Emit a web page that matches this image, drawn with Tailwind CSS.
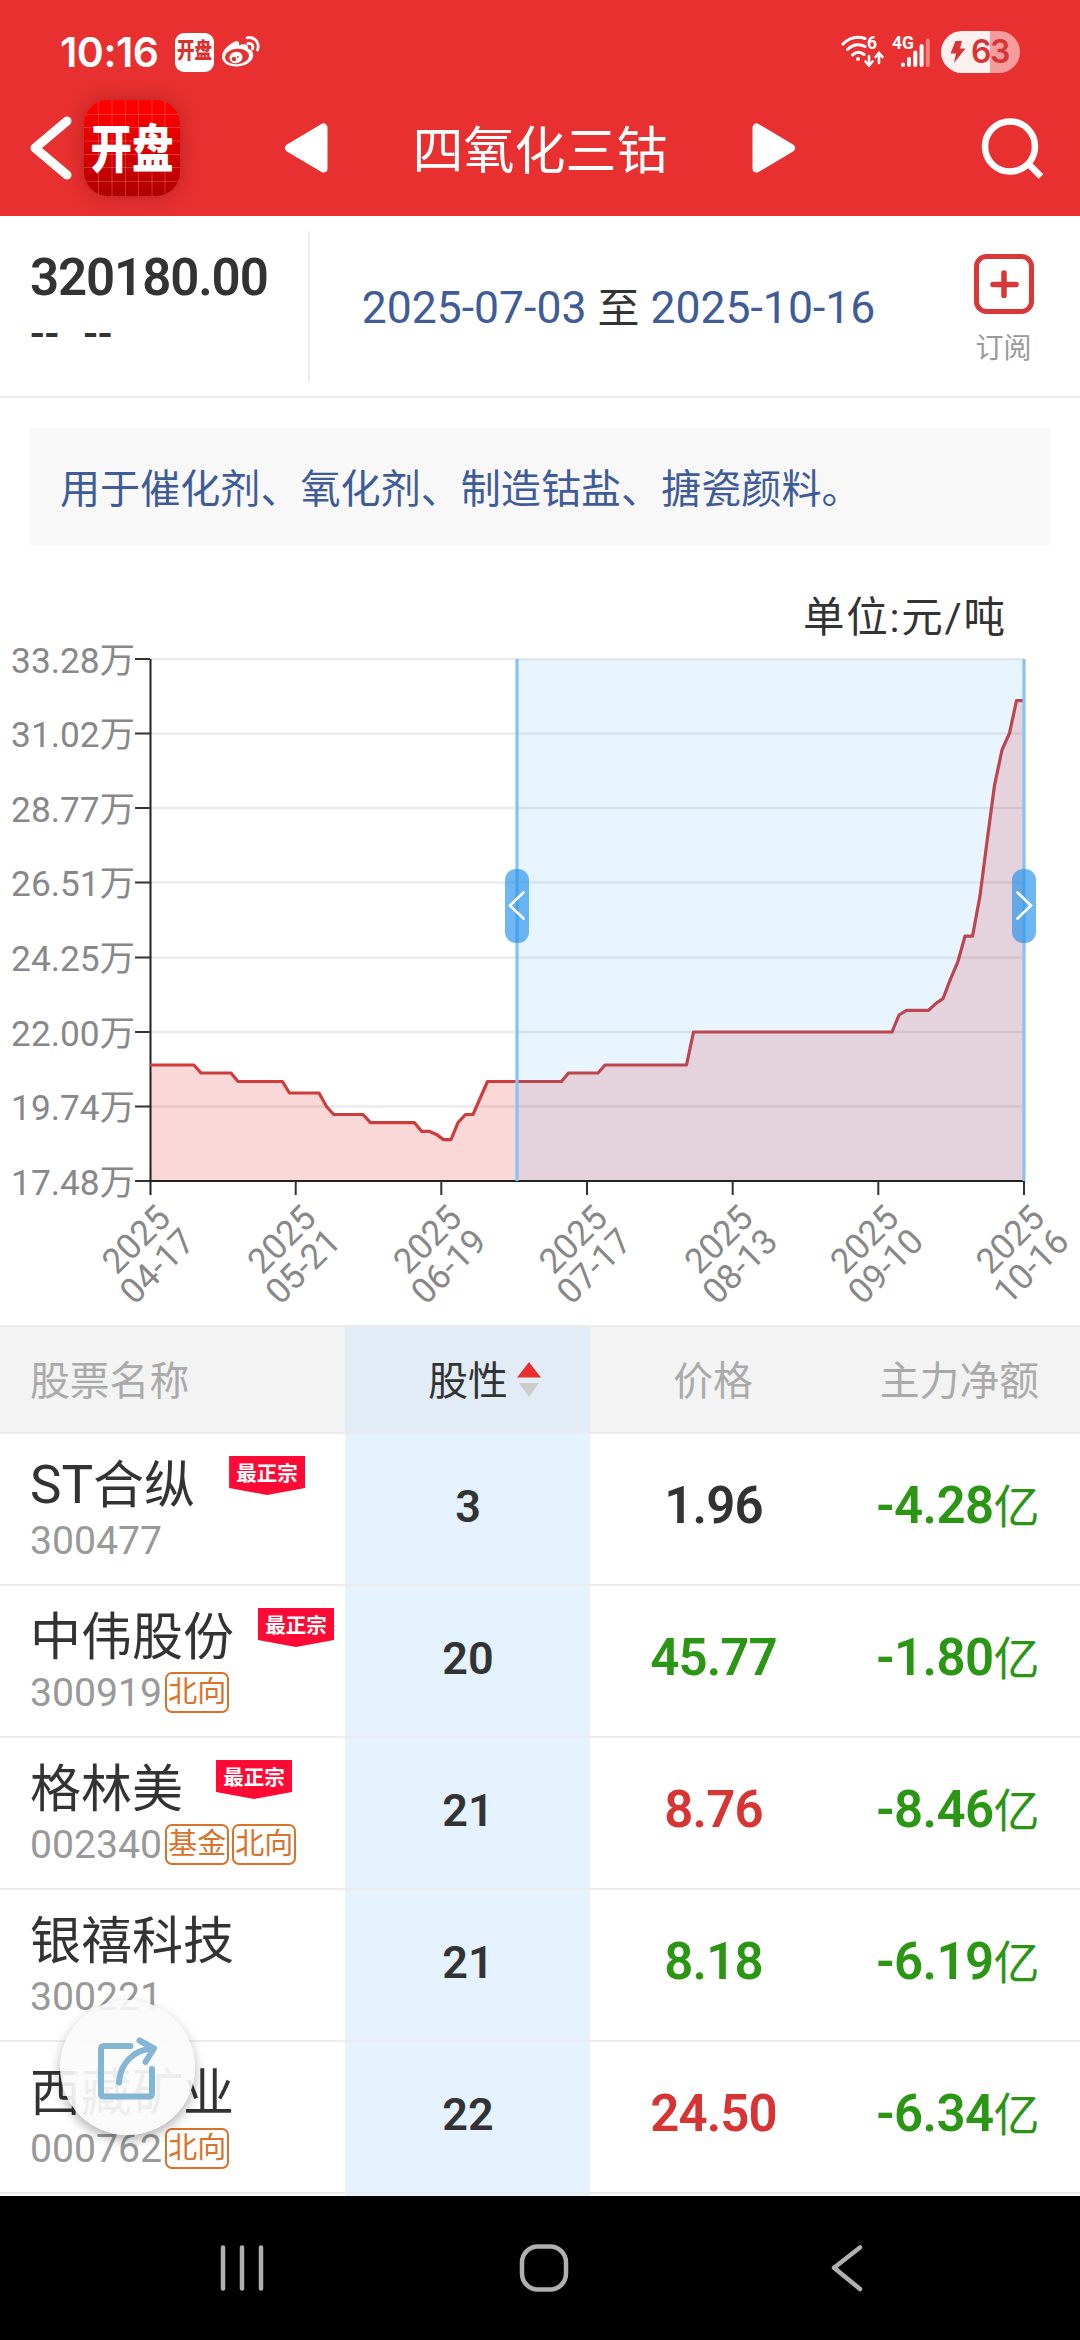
<!DOCTYPE html>
<html lang="zh-CN">
<head>
    <meta charset="UTF-8" />
    <meta name="viewport" content="width=device-width, initial-scale=1.0" />
    <title>四氧化三钴</title>
    <!-- Tailwind CSS -->
    <script src="https://cdn.jsdelivr.net/npm/@tailwindcss/browser@4"></script>
</head>
<body class="bg-white text-[#333] font-['Roboto','Noto_Sans_CJK_SC',sans-serif]">
<div class="relative w-[1080px] h-[2340px] flex flex-col overflow-hidden">

    <!-- Header -->
    <header class="h-[216px] shrink-0 bg-[#e83030] text-white">
        <!-- 状态栏 -->
        <div class="h-[84px] pl-[60px] pr-[60px] pt-5 flex items-center">
            <span class="w-[115px] text-[41px] leading-none font-semibold font-['Inter'] tracking-[-0.5px]">10:16</span>
            <span class="w-[39px] h-[39px] rounded-[9px] bg-white text-[#d93030] flex items-center justify-center">
                <span class="text-[17.5px] leading-none font-black scale-y-125">开盘</span>
            </span>
            <svg class="ml-2 w-[38px] h-[32px]" viewBox="0 0 38 32">
                <path d="M12 6C15 4 18 5 17 9.500C22 7 27 8 26 12.500C30 14 32 17 31 21C29 27 22 30.500 14.500 30.500C6 30.500 0 26.500 0 20.500C0 15 6 9 12 6Z" fill="#fff"/>
                <ellipse cx="15" cy="20.500" rx="12" ry="7.700" fill="#e83030" transform="rotate(-6 15 20.500)"/>
                <ellipse cx="14" cy="21.500" rx="6.600" ry="5.800" fill="#fff" transform="rotate(-15 14 21.500)"/>
                <circle cx="12" cy="23" r="2.200" fill="#e83030"/>
                <circle cx="15.800" cy="21" r="1" fill="#e83030"/>
                <path d="M25 1.800C33 0 38 7 35.500 14M26 7.500C30 6.800 31.500 9.500 30.500 13" fill="none" stroke="#fff" stroke-width="2.800" stroke-linecap="round"/>
            </svg>
            <svg class="ml-auto w-[90px] h-[36px]" viewBox="839 35 90 36">
                <g fill="none" stroke="#fff" stroke-linecap="round" stroke-width="3">
                    <path d="M842 45C849 38 857 37 864 39.500M846.500 50.500C852 45 859 44.500 864 47.500M851.500 56C855 52.500 859.500 52.500 863 55.500"/>
                    <path d="M868 57V66M864.500 62.500L868 66.500L871.500 62.500M878 64V54.500M874.500 58L878 54L881.500 58" stroke-width="2.600"/>
                </g>
                <circle cx="857" cy="60" r="2" fill="#fff"/>
                <text x="866" y="50" font-size="17.500" font-weight="700" fill="#fff">6</text>
                <text x="891" y="49.500" font-size="17.500" font-weight="700" fill="#fff" textLength="22">4G</text>
                <g stroke="#fff" stroke-width="4" stroke-linecap="round">
                    <path d="M902 65.500V66M908 60V66M914.300 53.500V66M920.600 47V66"/>
                    <path d="M926.800 41.500V66" stroke="#f58080"/>
                </g>
            </svg>
            <div class="ml-[11px] w-[79px] h-[42px] rounded-full bg-linear-to-r from-[#fdf0f0] from-62% to-[#f79c9c] to-62% text-[#d93434] flex items-center pl-[9px]">
                <svg class="w-[16px] h-[22px]" viewBox="0 0 16 22"><path d="M5.500 0H12L10 7.500H15.500L4 22L6 12.500H0.500Z" fill="#d93434"/></svg>
                <span class="ml-[5px] text-[32px] leading-none font-semibold font-['Inter'] tracking-[-1.500px]">63</span>
            </div>
        </div>
        <!-- 标题栏 -->
        <div class="h-[132px] flex items-center pl-[29px] pr-[35px] pb-[4px]">
            <svg class="w-[43px] h-[66px]" viewBox="0 0 43 66"><path d="M38 6L6 33L38 60" fill="none" stroke="#fff" stroke-width="9" stroke-linecap="round" stroke-linejoin="round"/></svg>
            <div class="ml-[12px] w-[96px] h-[96px] rounded-[24px] overflow-hidden shadow-[0_0_18px_rgba(120,20,20,0.45)]">
                <svg class="w-full h-full" viewBox="0 0 96 96">
                    <defs><linearGradient id="logo" x2="0" y2="1"><stop offset="0.1" stop-color="#fd0000"/><stop offset="1" stop-color="#b00000"/></linearGradient></defs>
                    <rect width="96" height="96" fill="url(#logo)"/>
                    <path d="M14.500 0V96M28 0V96M41.500 0V96M54.500 0V96M68 0V96M81 0V96M0 14.500H96M0 27.500H96M0 41H96M0 54.500H96M0 67.500H96M0 81.500H96" stroke="#fff" stroke-opacity=".2"/>
                    <text x="48" y="68" text-anchor="middle" font-size="41.500" font-weight="900" fill="#fff" transform="translate(0 -17) scale(1 1.250)">开盘</text>
                </svg>
            </div>
            <svg class="ml-[104px] w-[44px] h-[50px]" viewBox="0 0 44 50"><path d="M5 25L39.500 4.500V45.500Z" fill="#fff" stroke="#fff" stroke-width="8" stroke-linejoin="round"/></svg>
            <h1 class="w-[424px] pt-[7px] text-center text-[51px] leading-none">四氧化三钴</h1>
            <svg class="w-[44px] h-[50px]" viewBox="0 0 44 50"><path d="M39 25L4.500 4.500V45.500Z" fill="#fff" stroke="#fff" stroke-width="8" stroke-linejoin="round"/></svg>
            <svg class="ml-auto w-[64px] h-[64px]" viewBox="0 0 64 64"><circle cx="29" cy="30.500" r="25" fill="none" stroke="#fff" stroke-width="6.500"/><path d="M47.500 48L60 60.500" stroke="#fff" stroke-width="6.500"/></svg>
        </div>
    </header>

    <!-- 价格与日期区间 -->
    <section class="h-[182px] shrink-0 flex border-b-2 border-[#ebebeb]">
        <div class="w-[310px] h-[150px] mt-[15px] pl-[30px] border-r-2 border-[#ebebeb]">
            <p class="mt-[21px] text-[51px] leading-[52px] font-semibold tracking-[-1.1px]">320180.00</p>
            <p class="mt-[3px] flex gap-[24px] text-[43px] leading-[52px] font-medium"><span>--</span><span>--</span></p>
        </div>
        <p class="w-[617px] text-center text-[44.500px] leading-[184px] text-[#405c98]">2025-07-03 <span class="text-[#333] text-[42px]">至</span> 2025-10-16</p>
        <div class="w-[153px] pt-[38px] flex flex-col items-center">
            <svg class="w-[60px] h-[60px]" viewBox="0 0 60 60"><rect x="2.500" y="2.500" width="55" height="55" rx="10" fill="none" stroke="#d83838" stroke-width="5"/><path d="M30 19V41.500M19 30.500H42" stroke="#d83838" stroke-width="5.500" stroke-linecap="round"/></svg>
            <span class="mt-[20px] text-[28px] leading-[30px] text-[#999]">订阅</span>
        </div>
    </section>

    <!-- 说明 -->
    <p class="mx-[30px] mt-[30px] h-[117px] shrink-0 pl-[30px] bg-[#f8f8f8] text-[40.1px] leading-[123px] text-[#405c98]">用于催化剂、氧化剂、制造钴盐、搪瓷颜料。</p>

    <!-- 走势图 -->
    <svg class="w-[1080px] h-[780px] shrink-0" viewBox="0 545 1080 780">
        <text x="803" y="632" font-size="41.500" textLength="202" fill="#333">单位:元/吨</text>
        <path d="M150 659H1024M150 733.500H1024M150 808H1024M150 882.500H1024M150 957.500H1024M150 1032H1024M150 1106.500H1024" stroke="#ebebeb" stroke-width="2.500"/>
        <path id="area" fill="#e83030" fill-opacity=".19"/>
        <path d="M150.500 659V1195M150 1181H1024" stroke="#222" stroke-width="2" fill="none"/>
        <path d="M135 659H150M135 733.500H150M135 808H150M135 882.500H150M135 957.500H150M135 1032H150M135 1106.500H150M135 1181H150" stroke="#333" stroke-width="2"/>
        <path d="M295.700 1181V1195M441.300 1181V1195M587 1181V1195M732.700 1181V1195M878.300 1181V1195M1024 1181V1195" stroke="#333" stroke-width="2"/>
        <path id="line" fill="none" stroke="#cf3c3c" stroke-width="3.200" stroke-linejoin="round"/>
        <!-- 选中区间 -->
        <rect x="517" y="659" width="507" height="521" fill="#1e9bff" fill-opacity=".1"/>
        <path d="M517 659V1181M1024 659V1181" stroke="#87c3ef" stroke-width="3.200"/>
        <rect x="505" y="869" width="24" height="74" rx="11" fill="#2492eb" fill-opacity=".66"/>
        <rect x="1012" y="869" width="24" height="74" rx="11" fill="#2492eb" fill-opacity=".66"/>
        <path d="M523.500 892.500L510 905.500L523.500 918.500M1017.500 892.500L1031 905.500L1017.500 918.500" fill="none" stroke="#fff" stroke-width="2.600" stroke-linecap="round"/>
        <g id="yLabels" fill="#888" font-size="35.300" text-anchor="end"></g>
        <g id="xLabels" fill="#888" font-size="35" text-anchor="middle"></g>
    </svg>

    <!-- 股票列表 -->
    <section class="flex-1 min-h-0 overflow-hidden">
        <div class="h-[109px] flex items-center border-y-2 border-[#ebebeb] bg-[#f3f3f3] text-[39.800px] leading-[105px] text-[#aaa]">
            <span class="w-[345px] pl-[30px] pt-[3px]">股票名称</span>
            <span class="w-[245px] h-full bg-[#e1ecf7] text-[#333] flex items-center justify-center gap-[9px] pl-[34px]"><span class="pt-[3px]">股性</span>
                <svg class="w-[24px] h-[36px]" viewBox="0 0 24 36"><path d="M12 0L24 15.500H0Z" fill="#e83030"/><path d="M2 21H22L12 35Z" fill="#ccc"/></svg>
            </span>
            <span class="w-[246px] pt-[3px] text-center">价格</span>
            <span class="w-[244px] pt-[3px] pr-[41px] text-right">主力净额</span>
        </div>
        <div id="stockList"></div>
        <div class="h-[2px] flex"><span class="w-[345px] bg-white"></span><span class="w-[245px] bg-[#e5f2ff]"></span><span class="flex-1 bg-white"></span></div>
    </section>

    <!-- 底部导航 -->
    <nav class="h-[144px] shrink-0 bg-black">
        <svg class="w-[1080px] h-[144px]" viewBox="0 2196 1080 144" fill="none" stroke="#b0b0b0" stroke-width="4.500" stroke-linecap="round" stroke-linejoin="round">
            <path d="M223 2247.500V2288.500M242 2247.500V2288.500M261 2247.500V2288.500"/>
            <rect x="522" y="2246.500" width="44" height="43" rx="16"/>
            <path d="M860 2247.500L834 2267.700L860 2289"/>
        </svg>
    </nav>

    <!-- 分享悬浮按钮 -->
    <button class="absolute left-[60px] top-[2000px] w-[135px] h-[135px] rounded-full bg-[#fafafa]/90 shadow-[0_5px_12px_rgba(0,0,0,0.3)]">
        <svg class="w-[135px] h-[135px]" viewBox="60 2000 135 135">
            <path d="M105 2024H148L179 2055V2099L148 2130H105L73 2099V2055Z" fill="#fff" fill-opacity=".3"/>
            <g fill="none" stroke="#82b6d4" stroke-width="6" stroke-linecap="round" stroke-linejoin="round">
                <path d="M130.500 2046H104Q101 2046 101 2049V2093.500Q101 2096.500 104 2096.500H149Q152 2096.500 152 2093.500V2069"/>
                <path d="M119 2082.500C120 2063 134 2050 152 2048.500M139.500 2040.500L154 2048.500L145.500 2062"/>
            </g>
        </svg>
    </button>
</div>

    <script>
        // 走势折线
        const points = [
            [150,1065],[194,1065],[201,1073],[231,1073],[238,1081.5],[282.5,1081.5],[289.5,1093],[319,1093],
            [326.5,1106.5],[333.7,1114.5],[363,1114.5],[370.5,1122.7],[414.5,1122.7],[421.5,1131.3],[429,1131.3],
            [436.5,1134.4],[443.5,1139.6],[451,1139.6],[458,1122.7],[465.5,1114.5],[473,1114.5],[487.5,1081.5],
            [561.5,1081.5],[568.5,1073],[598,1073],[605,1065],[686.5,1065],[693.5,1032],[892,1032],[899,1015],
            [906.5,1010.3],[928.5,1010.3],[936,1003.4],[943,998.6],[951,977.8],[958,961.3],[965,936.2],[972.5,936.2],
            [980,895.9],[987.3,839.5],[994.5,785.3],[1002,750],[1009.5,733.2],[1016.5,700.7],[1024,700.7]
        ];
        const d = 'M' + points.map(p => p.join(' ')).join('L');
        document.getElementById('line').setAttribute('d', d);
        document.getElementById('area').setAttribute('d', d + 'V1181H150Z');

        // 坐标轴文字
        const yValues = ['33.28', '31.02', '28.77', '26.51', '24.25', '22.00', '19.74', '17.48'];
        document.getElementById('yLabels').innerHTML = yValues
            .map((v, i) => `<text x="135" y="${672.5 + i * 74.6}">${v}万</text>`).join('');

        const xValues = ['04-17', '05-21', '06-19', '07-17', '08-13', '09-10', '10-16'];
        document.getElementById('xLabels').innerHTML = xValues
            .map((v, i) => `
                <g transform="translate(${144.5 + i * 145.67} 1248) rotate(-45)">
                    <text>2025</text>
                    <text x="-4" y="34">${v}</text>
                </g>`).join('');

        // 股票行
        const green = 'text-[#2a9614]', red = 'text-[#d83434]', dark = 'text-[#333]';
        const stocks = [
            { name: '<span class="text-[53px]">ST</span>合纵', code: '300477', badge: 'ml-[34px]', tags: [], rank: 3, price: '1.96', color: dark, net: '-4.28' },
            { name: '中伟股份', code: '300919', badge: 'ml-[24px]', tags: ['北向'], rank: 20, price: '45.77', color: green, net: '-1.80' },
            { name: '格林美', code: '002340', badge: 'ml-[33px]', tags: ['基金', '北向'], rank: 21, price: '8.76', color: red, net: '-8.46' },
            { name: '银禧科技', code: '300221', badge: '', tags: [], rank: 21, price: '8.18', color: green, net: '-6.19' },
            { name: '西藏矿业', code: '000762', badge: '', tags: ['北向'], rank: 22, price: '24.50', color: red, net: '-6.34' }
        ];
        document.getElementById('stockList').innerHTML = stocks.map(s => `
            <div class="h-[152px] flex border-b-2 border-[#ebebeb] bg-white">
                <div class="w-[345px] pl-[30px]">
                    <div class="h-[84px] flex">
                        <span class="text-[51px] leading-[103px] whitespace-nowrap">${s.name}</span>
                        ${s.badge && `<span class="${s.badge} mt-[22px] w-[76px] h-[39px] shrink-0 bg-[#ff0a35] text-white text-[20.5px] leading-[36px] font-bold text-center [clip-path:polygon(0_0,100%_0,100%_82%,50%_100%,0_82%)]">最正宗</span>`}
                    </div>
                    <div class="flex items-center gap-[3px] h-[46px] text-[39.2px] leading-[49px] text-[#999]">
                        <span>${s.code}</span>
                        ${s.tags.map(t => `<span class="w-[64px] h-[41px] rounded-[7px] border-2 border-[#d9722a] text-[#d9722a] text-[29px] leading-[37px] flex justify-center -mt-[2px]">${t}</span>`).join('')}
                    </div>
                </div>
                <div class="w-[245px] pl-[1px] bg-[#e5f2ff] text-center text-[45px] leading-[146px] font-semibold">${s.rank}</div>
                <div class="w-[246px] pl-[1px] text-center text-[51px] leading-[144px] font-semibold tracking-[-0.9px] ${s.color}">${s.price}</div>
                <div class="w-[244px] pr-[41px] flex justify-end text-[51px] leading-[144px] font-semibold tracking-[-0.6px] text-[#2a9614]">${s.net}<span class="text-[46px] leading-[146px] font-normal">亿</span></div>
            </div>`).join('');
    </script>
</body>
</html>
